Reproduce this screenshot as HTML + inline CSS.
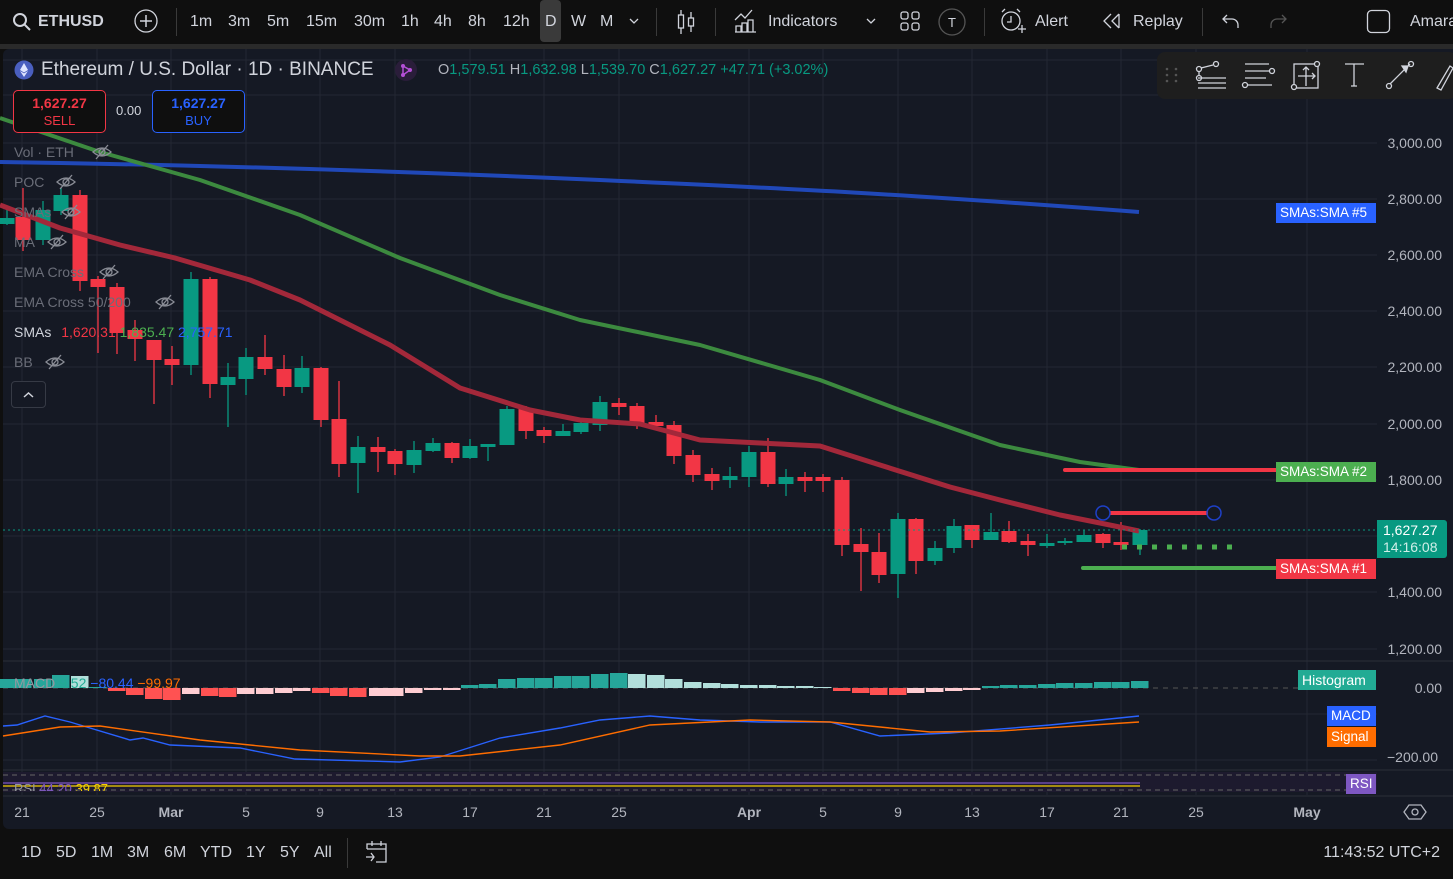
<!DOCTYPE html>
<html><head><meta charset="utf-8">
<style>
*{margin:0;padding:0;box-sizing:border-box}
body{width:1453px;height:879px;background:#0f0f0f;overflow:hidden;font-family:"Liberation Sans",sans-serif;color:#d1d4dc;position:relative}
.a{position:absolute;white-space:nowrap}
.tb{font-size:16px;top:13px;color:#d1d4dc}
.sep{position:absolute;top:8px;width:1px;height:28px;background:#3a3a3a}
.lg{font-size:14px;color:#6a6d78;left:14px}
.px{font-size:14px;color:#b2b5be;right:11px}
.tx{font-size:14px;color:#b2b5be;top:804px;transform:translateX(-50%)}
.bd{font-size:13.5px;color:#fff;padding:0 4px;line-height:20px;height:20px}
.bb{font-size:16px;top:844px;color:#d1d4dc}
</style></head><body>
<svg class="a" style="left:12px;top:12px" width="20" height="20" viewBox="0 0 20 20"><circle cx="8" cy="8" r="6" fill="none" stroke="#d1d4dc" stroke-width="2"/><path d="M12.5 12.5L18 18" stroke="#d1d4dc" stroke-width="2"/></svg>
<div class="a tb" style="left:38px;font-weight:bold">ETHUSD</div>
<svg class="a" style="left:134px;top:9px" width="24" height="24"><circle cx="12" cy="12" r="11" fill="none" stroke="#d1d4dc" stroke-width="1.3"/><path d="M12 6v12M6 12h12" stroke="#d1d4dc" stroke-width="1.5"/></svg>
<div class="sep" style="left:176px"></div>
<div class="a tb" style="left:190px">1m</div>
<div class="a tb" style="left:228px">3m</div>
<div class="a tb" style="left:267px">5m</div>
<div class="a tb" style="left:306px">15m</div>
<div class="a tb" style="left:354px">30m</div>
<div class="a tb" style="left:401px">1h</div>
<div class="a tb" style="left:434px">4h</div>
<div class="a tb" style="left:468px">8h</div>
<div class="a tb" style="left:503px">12h</div>
<div class="a" style="left:540px;top:0;width:21px;height:42px;background:#3a3a3a;border-radius:4px"></div>
<div class="a tb" style="left:545px">D</div>
<div class="a tb" style="left:571px">W</div>
<div class="a tb" style="left:600px">M</div>
<svg class="a" style="left:628px;top:17px" width="12" height="8"><path d="M2 2l4 4 4-4" fill="none" stroke="#d1d4dc" stroke-width="1.3"/></svg>
<div class="sep" style="left:656px"></div>
<svg class="a" style="left:676px;top:8px" width="20" height="28"><path d="M5 2v24M15 4v20" stroke="#d1d4dc" stroke-width="1.3"/><rect x="2.5" y="7" width="5" height="13" fill="#0f0f0f" stroke="#d1d4dc" stroke-width="1.3"/><rect x="12.5" y="10" width="5" height="8" fill="#0f0f0f" stroke="#d1d4dc" stroke-width="1.3"/></svg>
<div class="sep" style="left:715px"></div>
<svg class="a" style="left:734px;top:8px" width="24" height="26"><path d="M1 12l6-6 4 4 7-8" fill="none" stroke="#d1d4dc" stroke-width="1.3"/><path d="M2 24v-6h5v6M8 24v-9h5v9M14 24v-12h5v12M1 24h21" fill="none" stroke="#d1d4dc" stroke-width="1.3"/></svg>
<div class="a tb" style="left:768px">Indicators</div>
<svg class="a" style="left:865px;top:17px" width="12" height="8"><path d="M2 2l4 4 4-4" fill="none" stroke="#d1d4dc" stroke-width="1.3"/></svg>
<svg class="a" style="left:900px;top:11px" width="20" height="20"><rect x="1" y="1" width="7" height="7" rx="2" fill="none" stroke="#d1d4dc" stroke-width="1.3"/><rect x="12" y="1" width="7" height="7" rx="2" fill="none" stroke="#d1d4dc" stroke-width="1.3"/><rect x="1" y="12" width="7" height="7" rx="2" fill="none" stroke="#d1d4dc" stroke-width="1.3"/><rect x="12" y="12" width="7" height="7" rx="2" fill="none" stroke="#d1d4dc" stroke-width="1.3"/></svg>
<svg class="a" style="left:938px;top:8px" width="28" height="28"><circle cx="14" cy="14" r="13" fill="none" stroke="#555" stroke-width="1.3"/><text x="14" y="19" fill="#d1d4dc" font-size="13" text-anchor="middle" font-family="Liberation Sans">T</text></svg>
<div class="sep" style="left:984px"></div>
<svg class="a" style="left:999px;top:8px" width="28" height="28"><circle cx="12" cy="13" r="9" fill="none" stroke="#d1d4dc" stroke-width="1.3"/><path d="M12 8v6h-4M3 4l3-3M21 4l-3-3M19 21h8M23 17v8" fill="none" stroke="#d1d4dc" stroke-width="1.3"/></svg>
<div class="a tb" style="left:1035px">Alert</div>
<svg class="a" style="left:1101px;top:12px" width="22" height="18"><path d="M10 2L3 9l7 7M18 2l-7 7 7 7M18 2v14" fill="none" stroke="#d1d4dc" stroke-width="1.3"/></svg>
<div class="a tb" style="left:1133px">Replay</div>
<div class="sep" style="left:1202px"></div>
<svg class="a" style="left:1221px;top:12px" width="20" height="18"><path d="M6 3L2 7l4 4M2 7h9a6 6 0 0 1 6 6v3" fill="none" stroke="#d1d4dc" stroke-width="1.3"/></svg>
<svg class="a" style="left:1268px;top:12px" width="20" height="18"><path d="M14 3l4 4-4 4M18 7H9a6 6 0 0 0-6 6v3" fill="none" stroke="#555" stroke-width="1.3"/></svg>
<svg class="a" style="left:1366px;top:9px" width="26" height="26"><rect x="1.5" y="1.5" width="22" height="22" rx="4" fill="none" stroke="#d1d4dc" stroke-width="1.3"/></svg>
<div class="a tb" style="left:1410px">Amara</div>
<div class="a" style="left:0;top:44px;width:1453px;height:5px;background:#2a2a2a"></div>

<div class="a" style="left:3px;top:49px;width:1450px;height:780px;background:#151924;border-radius:6px 0 0 6px"></div>
<svg class="a" style="left:0;top:0" width="1453" height="879" id="ch">
<g stroke="#232733" stroke-width="1">
<path d="M3 143H1377M3 199H1377M3 255H1377M3 311H1377M3 367H1377M3 424H1377M3 480H1377M3 536H1377M3 592H1377M3 649H1377M3 714H1377M3 760H1377"/>
<path d="M22 49V795M97 49V795M171 49V795M246 49V795M320 49V795M395 49V795M470 49V795M544 49V795M619 49V795M749 49V795M823 49V795M898 49V795M972 49V795M1047 49V795M1121 49V795M1196 49V795M1307 49V795"/>
<path d="M3 95H1377M3 60H1377"/>
</g>
<path d="M3 661H1453M3 770H1453M3 796H1453" stroke="#2a2e39"/>
<rect x="3" y="772" width="1374" height="20" fill="#1d1a2e"/>
<path d="M3 775H1377M3 790H1377" stroke="#666" stroke-dasharray="5,4"/>
<path d="M3 688H1298" stroke="#555" stroke-dasharray="5,5"/>
<path d="M3 783H1140" stroke="#7e57c2" stroke-width="1.3"/>
<path d="M3 786H1140" stroke="#f5d000" stroke-width="1.3"/>
<g id="cd"></g>
<path d="M0 162 C200 165 400 171 600 180 S900 194 1139 212" fill="none" stroke="#2048b8" stroke-width="4"/>
<path d="M0 118 L100 152 L200 180 L300 215 L400 258 L500 295 L580 320 L700 345 L820 380 L900 410 L1000 445 L1080 462 L1139 470" fill="none" stroke="#3c8a3f" stroke-width="4" stroke-linejoin="round"/>
<path d="M0 205 L60 228 L120 245 L175 258 L250 280 L300 300 L330 315 L390 345 L460 388 L530 410 L580 420 L640 424 L700 440 L760 443 L820 446 L880 465 L950 487 L1000 500 L1060 515 L1100 523 L1139 531" fill="none" stroke="#a3283a" stroke-width="5" stroke-linejoin="round"/>
<path d="M3 530H1377" stroke="#089981" stroke-dasharray="2,3"/>
<path d="M1065 470H1276" stroke="#f23645" stroke-width="4" stroke-linecap="round"/>
<path d="M1110 513H1208" stroke="#f23645" stroke-width="4"/>
<circle cx="1103" cy="513" r="7" fill="none" stroke="#1e40c8" stroke-width="1.5"/>
<circle cx="1214" cy="513" r="7" fill="none" stroke="#1e40c8" stroke-width="1.5"/>
<path d="M1083 568H1276" stroke="#4caf50" stroke-width="4" stroke-linecap="round"/>
<path d="M1122 547H1232" stroke="#4caf50" stroke-width="5" stroke-dasharray="5,10"/>
<path d="M3 726L17 725L45 716L70 722L130 740L143 738L170 745L240 748L260 752L295 759L400 762L440 757L500 738L560 728L600 720L650 716L700 720L760 722L830 722L880 736L950 733L1050 725L1139 716" fill="none" stroke="#2962ff" stroke-width="1.4"/>
<path d="M3 736L60 727L100 726L200 740L300 750L420 756L460 756L560 745L650 725L750 720L830 722L930 732L1000 731L1139 722" fill="none" stroke="#ff6d00" stroke-width="1.4"/>
<rect x="1157" y="52" width="300" height="47" rx="8" fill="#1e1e1e"/>
<g fill="#555"><circle cx="1167" cy="69" r="1.3"/><circle cx="1176" cy="69" r="1.3"/><circle cx="1167" cy="75" r="1.3"/><circle cx="1176" cy="75" r="1.3"/><circle cx="1167" cy="81" r="1.3"/><circle cx="1176" cy="81" r="1.3"/></g>
<g fill="none" stroke="#d1d4dc" stroke-width="1.3">
<path d="M1198 78H1226M1198 83H1226M1198 88H1226"/><circle cx="1199" cy="69" r="2.5"/><circle cx="1216" cy="64" r="2.5"/><circle cx="1199" cy="78" r="2.5"/><path d="M1201 68l12-3M1199 71v5"/>
<path d="M1245 64H1269M1245 71H1269M1247 85H1272M1245 78H1266"/><circle cx="1272" cy="71" r="2.5"/><circle cx="1245" cy="85" r="2.5"/>
<rect x="1294" y="64" width="24" height="24"/><path d="M1306 67V86M1298 76H1315M1303 70l3-3 3 3M1312 73l3 3-3 3"/><circle cx="1317" cy="64" r="2.5" fill="#1e1e1e"/><circle cx="1294" cy="87" r="2.5" fill="#1e1e1e"/>
<path d="M1345 64H1364M1354 64V86M1351 86H1357"/>
<path d="M1390 84L1410 64"/><circle cx="1389" cy="86" r="2.5"/><circle cx="1411" cy="64" r="2.5"/><path d="M1402 66l6 0-2 6z" fill="#d1d4dc"/>
<path d="M1437 88L1450 66l3 2-12 22z"/>
</g>
<path d="M1409 805h12l5 7-5 7h-12l-5-7z" fill="none" stroke="#b2b5be" stroke-width="1.3"/><circle cx="1415" cy="812" r="3" fill="none" stroke="#b2b5be" stroke-width="1.3"/>
<g fill="none" stroke="#8a8d96" stroke-width="1.3" id="eyes"></g>
</svg>

<svg class="a" style="left:14px;top:60px" width="20" height="20"><circle cx="10" cy="10" r="9.5" fill="#4a5fbf"/><path d="M10 3l-4 7 4 2.5 4-2.5zM6 11l4 6 4-6-4 2.4z" fill="#dfe5ff"/></svg>
<div class="a" style="left:41px;top:59px;font-size:19px;color:#d1d4dc">Ethereum / U.S. Dollar · 1D · BINANCE</div>
<svg class="a" style="left:395px;top:59px" width="22" height="22"><circle cx="11" cy="11" r="11" fill="#2a1d3a"/><path d="M8 7l7 4-7 5z" fill="none" stroke="#b44fd6" stroke-width="1.5"/><circle cx="8" cy="7" r="2" fill="#b44fd6"/><circle cx="15" cy="11" r="2" fill="#b44fd6"/><circle cx="8" cy="16" r="2" fill="#b44fd6"/></svg>
<div class="a" style="left:438px;top:62px;font-size:14.5px;color:#089981"><span style="color:#b2b5be">O</span>1,579.51 <span style="color:#b2b5be">H</span>1,632.98 <span style="color:#b2b5be">L</span>1,539.70 <span style="color:#b2b5be">C</span>1,627.27 +47.71 (+3.02%)</div>
<div class="a" style="left:13px;top:90px;width:93px;height:43px;border:1px solid #f23645;border-radius:5px;background:#0f0f0f;text-align:center;font-size:14px;line-height:17px;padding-top:4px;color:#f23645"><b>1,627.27</b><br><span style="font-size:13px">SELL</span></div>
<div class="a" style="left:116px;top:103px;font-size:13px;color:#d1d4dc">0.00</div>
<div class="a" style="left:152px;top:90px;width:93px;height:43px;border:1px solid #2962ff;border-radius:5px;background:#0f0f0f;text-align:center;font-size:14px;line-height:17px;padding-top:4px;color:#2962ff"><b>1,627.27</b><br><span style="font-size:13px">BUY</span></div>
<div class="a lg" style="top:144px">Vol · ETH</div>
<div class="a lg" style="top:174px">POC</div>
<div class="a lg" style="top:204px">SMAs</div>
<div class="a lg" style="top:234px">MA</div>
<div class="a lg" style="top:264px">EMA Cross</div>
<div class="a lg" style="top:294px">EMA Cross 50/200</div>
<div class="a lg" style="top:324px;color:#d1d4dc">SMAs <span style="color:#f23645;margin-left:6px">1,620.31</span> <span style="color:#4caf50">1,835.47</span> <span style="color:#2962ff">2,757.71</span></div>
<div class="a lg" style="top:354px">BB</div>
<div class="a" style="left:11px;top:381px;width:35px;height:27px;border:1px solid #363a45;border-radius:4px;background:#151924"><svg width="33" height="25"><path d="M12 15l4.5-4 4.5 4" fill="none" stroke="#d1d4dc" stroke-width="1.5"/></svg></div>
<div class="a" style="left:14px;top:675px;font-size:14px;color:#9598a1">MACD <span style="color:#22ab94">9.52</span> <span style="color:#2962ff">−80.44</span> <span style="color:#ff6d00">−99.97</span></div>
<div class="a" style="left:14px;top:783px;font-size:13px;color:#9598a1;height:8px;overflow:hidden;line-height:11px">RSI <span style="color:#7e57c2">44.20</span> <span style="color:#f5d000">39.87</span></div>

<div class="a px" style="top:135px">3,000.00</div>
<div class="a px" style="top:191px">2,800.00</div>
<div class="a px" style="top:247px">2,600.00</div>
<div class="a px" style="top:303px">2,400.00</div>
<div class="a px" style="top:359px">2,200.00</div>
<div class="a px" style="top:416px">2,000.00</div>
<div class="a px" style="top:472px">1,800.00</div>
<div class="a px" style="top:584px">1,400.00</div>
<div class="a px" style="top:641px">1,200.00</div>
<div class="a px" style="top:680px">0.00</div>
<div class="a px" style="top:749px;right:15px">−200.00</div>
<div class="a bd" style="left:1276px;top:203px;background:#2962ff;width:100px">SMAs:SMA #5</div>
<div class="a bd" style="left:1276px;top:462px;background:#4caf50;width:100px">SMAs:SMA #2</div>
<div class="a bd" style="left:1276px;top:559px;background:#f23645;width:100px">SMAs:SMA #1</div>
<div class="a" style="left:1377px;top:520px;width:70px;height:38px;background:#089981;border-radius:0 3px 3px 0;font-size:14px;color:#fff;line-height:17px;padding:2px 0 0 6px">1,627.27<br><span style="color:#cfeee8">14:16:08</span></div>
<div class="a bd" style="left:1298px;top:670px;background:#22ab94;width:78px;font-size:14px">Histogram</div>
<div class="a bd" style="left:1327px;top:706px;background:#2962ff;width:49px">MACD</div>
<div class="a bd" style="left:1327px;top:727px;background:#ff6d00;width:49px">Signal</div>
<div class="a bd" style="left:1346px;top:774px;background:#7e57c2;width:30px">RSI</div>

<div class="a tx" style="left:22px">21</div>
<div class="a tx" style="left:97px">25</div>
<div class="a tx" style="left:171px;font-weight:bold">Mar</div>
<div class="a tx" style="left:246px">5</div>
<div class="a tx" style="left:320px">9</div>
<div class="a tx" style="left:395px">13</div>
<div class="a tx" style="left:470px">17</div>
<div class="a tx" style="left:544px">21</div>
<div class="a tx" style="left:619px">25</div>
<div class="a tx" style="left:749px;font-weight:bold">Apr</div>
<div class="a tx" style="left:823px">5</div>
<div class="a tx" style="left:898px">9</div>
<div class="a tx" style="left:972px">13</div>
<div class="a tx" style="left:1047px">17</div>
<div class="a tx" style="left:1121px">21</div>
<div class="a tx" style="left:1196px">25</div>
<div class="a tx" style="left:1307px;font-weight:bold">May</div>

<div class="a bb" style="left:21px">1D</div>
<div class="a bb" style="left:56px">5D</div>
<div class="a bb" style="left:91px">1M</div>
<div class="a bb" style="left:127px">3M</div>
<div class="a bb" style="left:164px">6M</div>
<div class="a bb" style="left:200px">YTD</div>
<div class="a bb" style="left:246px">1Y</div>
<div class="a bb" style="left:280px">5Y</div>
<div class="a bb" style="left:314px">All</div>
<div class="a" style="left:347px;top:838px;width:1px;height:30px;background:#3a3a3a"></div>
<svg class="a" style="left:364px;top:840px" width="26" height="26"><path d="M3 9V4h19v18H12M3 9h19M8 1v5M17 1v5M2 17h8M7 13l3 4-3 4" fill="none" stroke="#d1d4dc" stroke-width="1.3"/></svg>
<div class="a bb" style="right:13px">11:43:52 UTC+2</div>

<script>
var G='#089981',R='#f23645';
var c=[[7,218,224,209,225,1],[23,217,240,188,251,0],[43,210,240,201,245,1],[61,195,211,188,215,1],[80,195,281,190,291,0],[98,279,287,276,353,0],[117,287,333,283,354,0],[135,330,339,320,361,0],[154,340,360,346,404,0],[172,359,365,346,385,0],[191,279,365,272,375,1],[210,279,384,277,398,0],[228,377,385,363,427,1],[246,357,379,348,395,1],[265,357,369,335,375,0],[284,369,387,355,396,0],[302,368,387,356,393,1],[321,368,420,367,427,0],[339,419,464,381,477,0],[358,447,463,436,493,1],[378,447,452,437,472,0],[395,451,464,449,475,0],[414,450,465,441,473,1],[433,443,451,438,452,1],[452,443,458,442,463,0],[470,446,458,439,459,1],[488,444,447,444,461,1],[507,409,445,406,445,1],[526,409,431,406,439,0],[544,430,436,427,443,0],[563,431,436,424,436,1],[581,423,432,420,434,1],[600,402,425,396,431,1],[619,403,407,398,415,0],[637,406,424,403,429,0],[656,422,426,415,429,0],[674,425,456,421,464,0],[693,455,475,450,482,0],[712,474,481,468,490,0],[730,476,480,467,488,1],[749,452,477,446,487,1],[768,452,484,438,487,0],[786,477,484,469,496,1],[805,477,481,472,492,0],[823,477,481,474,492,0],[842,480,545,477,556,0],[861,544,552,528,591,0],[879,552,575,533,583,0],[898,519,574,513,598,1],[916,519,561,518,574,0],[935,548,561,541,565,1],[954,526,548,519,553,1],[972,525,540,525,548,0],[991,532,540,513,540,1],[1009,531,542,521,543,0],[1028,541,545,534,556,0],[1047,543,546,534,548,1],[1065,541,543,538,545,1],[1084,535,542,530,542,1],[1103,534,543,533,548,0],[1121,542,545,522,550,0],[1140,530,545,529,555,1]];
var g=document.getElementById('cd'),h='';
c.forEach(function(k){var col=k[5]?G:R;h+='<path d="M'+k[0]+' '+k[3]+'V'+k[4]+'" stroke="'+col+'" stroke-width="1.3"/><rect x="'+(k[0]-7.5)+'" y="'+k[1]+'" width="15" height="'+Math.max(2,k[2]-k[1])+'" fill="'+col+'"/>';});
var hv=[9,9,9,13,12,0,-3,-7,-11,-12,-6,-8,-9,-6,-6,-5,-3,-5,-8,-9,-8,-8,-5,-2,-2,3,4,9,10,10,12,12,14,15,14,13,9,6,5,4,3,3,2,2,1,-3,-5,-7,-7,-5,-4,-3,-2,2,3,3,4,5,5,6,6,7,8];
var lt=[0,0,0,0,1,0,0,0,0,0,1,0,0,1,1,1,1,0,0,0,1,1,1,1,1,0,0,0,0,0,0,0,0,0,1,1,1,1,1,1,1,1,1,1,1,0,0,0,0,1,1,1,1,0,0,0,0,0,0,0,0,0,0];
c.forEach(function(k,i){var v=hv[i]||0;var col=v>=0?(lt[i]?'#b2dfdb':'#26a69a'):(lt[i]?'#ffcdd2':'#ff5252');if(v==0)v=1;h+='<rect x="'+(k[0]-9)+'" y="'+(v>0?688-v:688)+'" width="17.5" height="'+Math.abs(v)+'" fill="'+col+'"/>';});
g.innerHTML=h;
var e=document.getElementById('eyes'),s='';
[[102,152],[66,182],[71,212],[57,242],[109,272],[165,302],[55,362]].forEach(function(p){s+='<path d="M'+(p[0]-9)+' '+p[1]+'q9-8 18 0q-9 8-18 0z"/><circle cx="'+p[0]+'" cy="'+p[1]+'" r="3"/><path d="M'+(p[0]-6)+' '+(p[1]+7)+'l12-14"/>';});
e.innerHTML=s;
</script>
</body></html>
